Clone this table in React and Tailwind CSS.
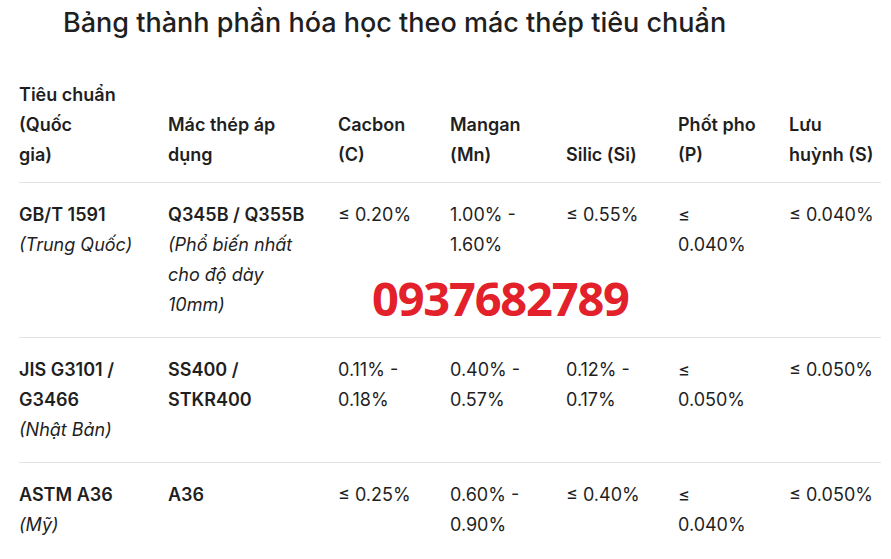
import React from "react";

// each cell is a list of lines: [text, style]
const B = "font-semibold";
const I = "italic";
const N = "";

const headers = [
  ["Tiêu chuẩn", "(Quốc", "gia)"],
  ["Mác thép áp", "dụng"],
  ["Cacbon", "(C)"],
  ["Mangan", "(Mn)"],
  ["Silic (Si)"],
  ["Phốt pho", "(P)"],
  ["Lưu", "huỳnh (S)"],
];

const rows = [
  [
    [["GB/T 1591", B], ["(Trung Quốc)", I]],
    [["Q345B / Q355B", B], ["(Phổ biến nhất", I], ["cho độ dày", I], ["10mm)", I]],
    [["≤ 0.20%", N]],
    [["1.00% -", N], ["1.60%", N]],
    [["≤ 0.55%", N]],
    [["≤", N], ["0.040%", N]],
    [["≤ 0.040%", N]],
  ],
  [
    [["JIS G3101 /", B], ["G3466", B], ["(Nhật Bản)", I]],
    [["SS400 /", B], ["STKR400", B]],
    [["0.11% -", N], ["0.18%", N]],
    [["0.40% -", N], ["0.57%", N]],
    [["0.12% -", N], ["0.17%", N]],
    [["≤", N], ["0.050%", N]],
    [["≤ 0.050%", N]],
  ],
  [
    [["ASTM A36", B], ["(Mỹ)", I]],
    [["A36", B]],
    [["≤ 0.25%", N]],
    [["0.60% -", N], ["0.90%", N]],
    [["≤ 0.40%", N]],
    [["≤", N], ["0.040%", N]],
    [["≤ 0.050%", N]],
  ],
];

const widths = ["w-[149px]", "w-[170px]", "w-[112px]", "w-[116px]", "w-[112px]", "w-[111px]", "w-[92px]"];

export default function App() {
  return (
    <div
      className="relative w-[891px] h-[559px] overflow-hidden bg-white text-[#1f1f1f]"
      style={{ fontFamily: "Inter, 'Noto Sans', sans-serif" }}
    >
      <h1 className="pl-[63px] pt-[6px] text-[27px] leading-[34px] font-medium">
        Bảng thành phần hóa học theo mác thép tiêu chuẩn
      </h1>

      <table className="ml-[19px] mt-[40px] w-[862px] table-fixed border-collapse text-[18px] leading-[30px]">
        <colgroup>
          {widths.map((w, i) => (
            <col key={i} className={w} />
          ))}
        </colgroup>
        <thead>
          <tr className="border-b border-[#e3e3e3]">
            {headers.map((lines, i) => (
              <th key={i} className="p-0 pb-[12px] text-left align-bottom font-semibold">
                {lines.map((l, j) => (
                  <div key={j} className="whitespace-nowrap">{l}</div>
                ))}
              </th>
            ))}
          </tr>
        </thead>
        <tbody>
          {rows.map((cells, i) => (
            <tr key={i} className={i < rows.length - 1 ? "border-b border-[#e3e3e3]" : ""}>
              {cells.map((lines, j) => (
                <td key={j} className="p-0 pt-[17px] pb-[17px] align-top">
                  {lines.map(([t, cls], k) => (
                    <div key={k} className={`whitespace-nowrap ${cls}`}>{t}</div>
                  ))}
                </td>
              ))}
            </tr>
          ))}
        </tbody>
      </table>

      <div
        className="absolute left-[372px] top-[275px] text-[47px] leading-[47px] font-bold text-[#e3212b] tracking-[-1.2px]"
        style={{ fontFamily: "'Open Sans', sans-serif" }}
      >
        0937682789
      </div>
    </div>
  );
}
